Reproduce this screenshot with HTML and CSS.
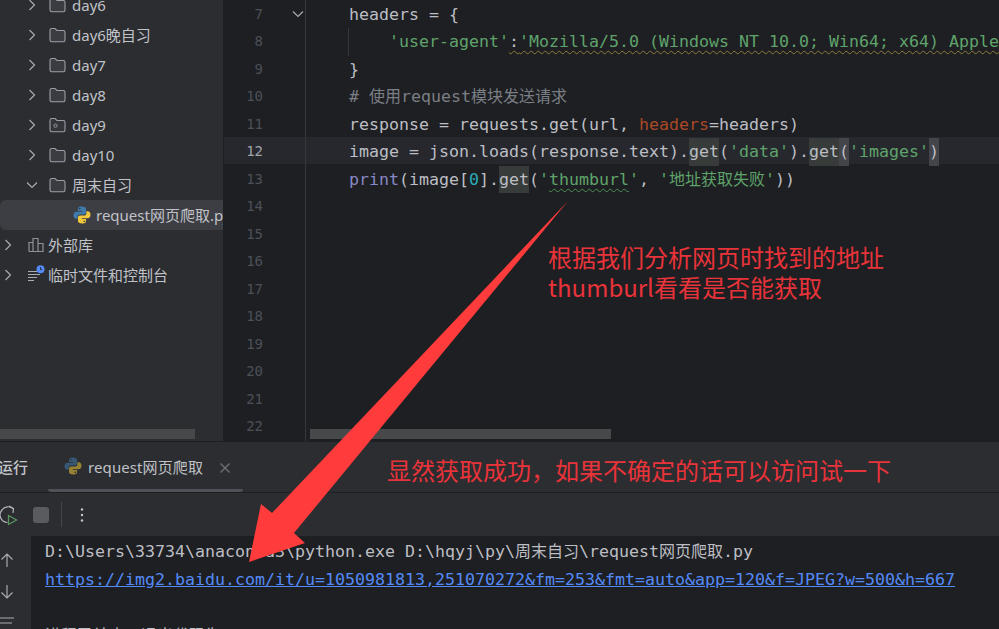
FILE: index.html
```html
<!DOCTYPE html>
<html lang="zh-CN">
<head>
<meta charset="utf-8">
<title>request网页爬取</title>
<link rel="stylesheet" href="styles.css">
</head>
<body>
<svg class="defs" width="0" height="0">
  <symbol id="chev-r" viewBox="0 0 16 16"><path d="M5.5 3 10.5 8 5.5 13" fill="none" stroke="#a8abb2" stroke-width="1.2"/></symbol>
  <symbol id="chev-d" viewBox="0 0 16 16"><path d="M3 5.5 8 10.5 13 5.5" fill="none" stroke="#a8abb2" stroke-width="1.2"/></symbol>
  <symbol id="folder" viewBox="0 0 17 16"><path d="M1 3.2C1 2.2 1.7 1.5 2.7 1.5H6L8 3.5H14.3C15.3 3.5 16 4.2 16 5.2V13C16 14 15.3 14.7 14.3 14.7H2.7C1.7 14.7 1 14 1 13Z" fill="#3a3c41" stroke="#9b9ea6" stroke-width="1.1"/></symbol>
  <symbol id="python" viewBox="0 0 18 18">
    <path d="M8.8 0.5C5.5 0.5 5 2 5 3V5H9.2V5.7H3.4C1.6 5.7 0.5 7 0.5 9.2 0.5 11.4 1.6 12.7 3.2 12.7H4.6V10.6C4.6 9.2 5.8 8.4 7 8.4H11C12.1 8.4 13 7.5 13 6.4V3C13 1.500 11.500 0.500 8.8 0.500Z" fill="#3f7cad"/>
    <circle cx="6.800" cy="2.700" r="0.800" fill="#2b2d30"/>
    <path d="M9.200 17.500C12.500 17.500 13 16 13 15V13H8.800V12.300H14.600C16.400 12.300 17.500 11 17.500 8.800 17.500 6.600 16.400 5.300 14.800 5.300H13.400V7.400C13.400 8.800 12.200 9.600 11 9.600H7C5.900 9.600 5 10.500 5 11.600V15C5 16.500 6.500 17.500 9.200 17.500Z" fill="#f2c83c"/>
    <circle cx="11.200" cy="15.300" r="0.800" fill="#2b2d30"/>
  </symbol>
</svg>

<div class="app">
  <div class="top">
    <aside class="sidebar">
      <ul class="tree">
        <li class="row l1"><svg class="chev"><use href="#chev-r"/></svg><svg class="folder"><use href="#folder"/></svg><span>day6</span></li>
        <li class="row l1"><svg class="chev"><use href="#chev-r"/></svg><svg class="folder"><use href="#folder"/></svg><span class="up">day6晚自习</span></li>
        <li class="row l1"><svg class="chev"><use href="#chev-r"/></svg><svg class="folder"><use href="#folder"/></svg><span>day7</span></li>
        <li class="row l1"><svg class="chev"><use href="#chev-r"/></svg><svg class="folder"><use href="#folder"/></svg><span>day8</span></li>
        <li class="row l1"><svg class="chev"><use href="#chev-r"/></svg>
          <svg class="folder" viewBox="0 0 17 16"><path d="M1 3.2C1 2.2 1.7 1.500 2.700 1.500H6L8 3.500H14.300C15.300 3.500 16 4.200 16 5.200V13C16 14 15.300 14.700 14.300 14.700H2.700C1.700 14.700 1 14 1 13Z" fill="#33353a" stroke="#9b9ea6" stroke-width="1.100"/><circle cx="6.500" cy="8.700" r="1.600" fill="none" stroke="#9b9ea6"/></svg><span>day9</span></li>
        <li class="row l1"><svg class="chev"><use href="#chev-r"/></svg><svg class="folder"><use href="#folder"/></svg><span>day10</span></li>
        <li class="row l1"><svg class="chev"><use href="#chev-d"/></svg><svg class="folder"><use href="#folder"/></svg><span class="up">周末自习</span></li>
        <li class="row file"><svg class="py"><use href="#python"/></svg><span class="up">request网页爬取.py</span></li>
        <li class="row l0"><svg class="chev"><use href="#chev-r"/></svg>
          <svg class="root-icon" viewBox="0 0 17 16"><path d="M1.500 14.500V5.500H5.500V14.500M5.500 14.500V1.500H10.500V14.500M10.500 14.500V6.500H15.500V14.500ZM1.500 14.500H15.500" fill="none" stroke="#8f9299" stroke-width="1.200"/></svg><span class="up">外部库</span></li>
        <li class="row l0"><svg class="chev"><use href="#chev-r"/></svg>
          <svg class="root-icon" viewBox="0 0 18 16"><path d="M1 4.500H11M1 7.500H13M1 10.500H10M1 13.500H7" fill="none" stroke="#a8abb2" stroke-width="1.200"/><circle cx="13.500" cy="2.200" r="4" fill="#548af7"/><path d="M13.500 0.200V2.400H15.200" fill="none" stroke="#1e1f22" stroke-width="0.900"/></svg><span class="up">临时文件和控制台</span></li>
      </ul>
      <div class="hscroll side-thumb"></div>
    </aside>

    <main class="editor">
      <div class="current-line"></div>
      <div class="gutter">
        <div class="num">7<svg class="fold"><use href="#chev-d"/></svg></div>
        <div class="num">8</div><div class="num">9</div><div class="num">10</div><div class="num">11</div>
        <div class="num now">12</div>
        <div class="num">13</div><div class="num">14</div><div class="num">15</div><div class="num">16</div>
        <div class="num">17</div><div class="num">18</div><div class="num">19</div><div class="num">20</div><div class="num">21</div><div class="num">22</div>
      </div>
      <div class="code">
        <div class="ln">headers = {</div>
        <div class="ln guide">    <span class="str">'user-agent'</span><span class="warn">:<span class="str">'Mozilla/5.0 (Windows NT 10.0; Win64; x64) AppleWebKit/537.36</span></span></div>
        <div class="ln">}</div>
        <div class="ln cmt"># <span class="cjk">使用</span>request<span class="cjk">模块发送请求</span></div>
        <div class="ln">response = requests.get(url, <span class="kw">headers</span>=headers)</div>
        <div class="ln">image = json.loads(response.text).<span class="hl">get</span>(<span class="str">'data'</span>).<span class="hl">get</span><span class="br">(</span><span class="str">'images'</span><span class="br">)</span></div>
        <div class="ln"><span class="fn">print</span>(image[<span class="n">0</span>].<span class="hl">get</span>(<span class="str">'<span class="typo">thumburl</span>'</span>, <span class="str">'<span class="cjk">地址获取失败</span>'</span>))</div>
      </div>
      <div class="hscroll code-thumb"></div>
    </main>
  </div>

  <section class="panel">
    <div class="tabs">
      <span class="tabs-title">运行</span>
      <div class="tab">
        <svg class="py dim"><use href="#python"/></svg>
        <span>request网页爬取</span>
        <svg class="close" viewBox="0 0 12 12"><path d="M1.500 1.500 10.500 10.500M10.500 1.500 1.500 10.500" stroke="#6f737a" stroke-width="1.200"/></svg>
      </div>
    </div>
    <div class="toolbar">
      <svg class="rerun" viewBox="0 0 20 20"><path d="M9.500 17.500A7.500 7.500 0 0 1 4 5 7.500 7.500 0 0 1 15 3.500" fill="none" stroke="#b4b7bd" stroke-width="1.200"/><path d="M11 1 15.500 3.500 15 8" fill="none" stroke="#b4b7bd" stroke-width="1.200"/><path d="M10.500 10.500 18.500 15 10.500 19.500Z" fill="none" stroke="#57965c" stroke-width="1.300"/></svg>
      <span class="stop"></span>
      <span class="sep"></span>
      <svg class="dots" viewBox="0 0 4 16"><circle cx="2" cy="2.500" r="1.200" fill="#c4c6cc"/><circle cx="2" cy="8" r="1.200" fill="#c4c6cc"/><circle cx="2" cy="13.500" r="1.200" fill="#c4c6cc"/></svg>
    </div>
    <div class="console">
      <div class="console-tools">
        <svg class="tool" viewBox="0 0 16 16"><path d="M8 15V2M2.500 7.500 8 2 13.500 7.500" fill="none" stroke="#a8abb2" stroke-width="1.200"/></svg>
        <svg class="tool" viewBox="0 0 16 16"><path d="M8 1V14M2.500 8.500 8 14 13.500 8.500" fill="none" stroke="#a8abb2" stroke-width="1.200"/></svg>
        <svg class="tool" viewBox="0 0 16 16"><path d="M1 2H15M1 7H13" fill="none" stroke="#a8abb2" stroke-width="1.200"/></svg>
      </div>
      <div class="output">
        <div class="out-ln">D:\Users\33734\anaconda3\python.exe D:\hqyj\py\<span class="cjk">周末自习</span>\request<span class="cjk">网页爬取</span>.py</div>
        <div class="out-ln"><a class="link" href="#">https://img2.baidu.com/it/u=1050981813,251070272&amp;fm=253&amp;fmt=auto&amp;app=120&amp;f=JPEG?w=500&amp;h=667</a></div>
        <div class="out-ln"></div>
        <div class="out-ln"><span class="cjk">进程已结束，退出代码为</span> 0</div>
      </div>
    </div>
  </section>

  <svg class="arrow" viewBox="0 0 999 629"><polygon points="568,201 272,513 261,504 249,562 305,543 294,533" fill="#ff3b3b"/></svg>
  <p class="note note-a">根据我们分析网页时找到的地址<br>thumburl看看是否能获取</p>
  <p class="note note-b">显然获取成功，如果不确定的话可以访问试一下</p>
</div>
</body>
</html>
```
FILE: styles.css
```css
* { box-sizing: border-box; }
html, body { margin: 0; padding: 0; background: #1e1f22; }
.defs { position: absolute; }
.app {
  position: relative;
  width: 999px;
  height: 629px;
  overflow: hidden;
  display: flex;
  flex-direction: column;
  font-family: "Noto Sans", "Noto Sans CJK SC", sans-serif;
  color: #c4c6cc;
}
.top { display: flex; height: 441px; flex: none; }

/* project tree */
.sidebar {
  position: relative;
  flex: none;
  width: 224px;
  background: #2b2d30;
  border-right: 1px solid #1e1f22;
  overflow: hidden;
}
.tree { list-style: none; margin: -10px 0 0; padding: 0; }
.row {
  display: flex;
  align-items: center;
  height: 30px;
  font-size: 15px;
  white-space: nowrap;
  color: #c0c2c8;
}
.up { margin-bottom: 2px; }
.l1 { padding-left: 24px; }
.l0 { padding-left: 0; }
.chev { width: 16px; height: 16px; flex: none; }
.folder { width: 17px; height: 16px; flex: none; margin-left: 9px; margin-right: 6px; }
.root-icon { width: 18px; height: 16px; flex: none; margin-left: 11px; margin-right: 3px; overflow: visible; }
.file {
  padding-left: 73px;
  background: #3d3e43;
  border-radius: 6px 0 0 6px;
}
.py { width: 18px; height: 18px; flex: none; margin-right: 5px; }
.py.dim { opacity: 0.55; margin-right: 6px; }
.hscroll { position: absolute; top: 429px; height: 10px; background: #47484a; }
.side-thumb { left: 0; width: 195px; }
.code-thumb { left: 86px; width: 301px; }

/* editor */
.editor {
  position: relative;
  flex: 1;
  display: flex;
  background: #1e1f22;
  font-family: "DejaVu Sans Mono", "Noto Sans CJK SC", monospace;
}
.current-line { position: absolute; left: 0; right: 0; top: 137px; height: 27px; background: #26282e; }
.gutter { position: relative; flex: none; width: 82px; border-right: 1px solid #35373b; padding-top: 0.5px; }
.num {
  position: relative;
  width: 39px;
  height: 27.5px;
  line-height: 27.5px;
  text-align: right;
  font-size: 14px;
  color: #4b5059;
}
.num.now { color: #a1a3ab; }
.fold { position: absolute; left: 66px; top: 5px; width: 16px; height: 16px; }
.code { position: relative; flex: 1; padding: 0.5px 0 0 43px; font-size: 16.61px; color: #bcbec4; overflow: hidden; }
.ln { position: relative; height: 27.5px; line-height: 27.5px; white-space: pre; }
.guide::before { content: ""; position: absolute; left: -1px; top: 0; height: 27.5px; width: 1px; background: #35373b; }
.str { color: #5fa36b; }
.warn { text-decoration: underline wavy #8c7a3c 1px; text-underline-offset: 3px; }
.typo { text-decoration: underline wavy #4f8f58 1px; text-underline-offset: 3px; }
.cmt { color: #7a7e85; }
.kw { color: #aa4926; }
.fn { color: #8888c6; }
.n { color: #2aacb8; }
.hl { display: inline-block; height: 27.5px; background: #373b39; }
.br { display: inline-block; height: 27.5px; background: #43454a; }
.cjk { font-size: 16px; line-height: 0; font-family: "Noto Sans CJK SC", sans-serif; }

/* run panel */
.panel { flex: 1; display: flex; flex-direction: column; background: #2b2d30; border-top: 1px solid #1e1f22; min-height: 0; }
.tabs { flex: none; height: 51px; display: flex; align-items: center; border-bottom: 1px solid #1e1f22; padding-top: 1px; }
.tabs-title { width: 50px; margin-left: -2px; margin-bottom: 3px; font-size: 15px; font-weight: 500; color: #c4c6cc; flex: none; }
.tab {
  position: relative;
  display: flex;
  align-items: center;
  height: 100%;
  width: 195px;
  padding-left: 16px;
  font-size: 15px;
  letter-spacing: 0.1px;
  color: #c0c2c8;
  border-bottom: 3px solid #4e5157;
  border-bottom-left-radius: 3px;
  border-bottom-right-radius: 3px;
}
.close { width: 12px; height: 12px; margin-left: 16px; margin-top: 3px; }
.toolbar { flex: none; height: 43px; display: flex; align-items: center; }
.rerun { width: 20px; height: 20px; margin-left: -2px; flex: none; overflow: visible; }
.stop { width: 16px; height: 16px; margin-left: 15px; border-radius: 3px; background: #5a5b5e; flex: none; }
.sep { width: 1px; height: 25px; margin-left: 12px; background: #43454a; flex: none; }
.dots { width: 4px; height: 16px; margin-left: 18px; flex: none; }
.console { flex: 1; display: flex; min-height: 0; overflow: hidden; }
.console-tools { flex: none; width: 31px; display: flex; flex-direction: column; gap: 16px; padding-top: 16px; background: #2b2d30; }
.tool { width: 16px; height: 16px; flex: none; margin-left: -1px; }
.output { flex: 1; background: #1e1f22; padding: 2px 0 0 14px; font-family: "DejaVu Sans Mono", "Noto Sans CJK SC", monospace; font-size: 16.61px; color: #bcbec4; }
.out-ln { height: 28px; line-height: 28px; white-space: pre; }
.link { color: #548af7; text-decoration: underline; }

/* red screenshot annotations */
.arrow { position: absolute; left: 0; top: 0; width: 999px; height: 629px; pointer-events: none; }
.note { position: absolute; margin: 0; font-size: 24px; line-height: 30px; color: #e9333a; font-family: "Noto Sans CJK SC", sans-serif; white-space: nowrap; }
.note-a { left: 548px; top: 242px; }
.note-b { left: 387px; top: 455px; }
```
